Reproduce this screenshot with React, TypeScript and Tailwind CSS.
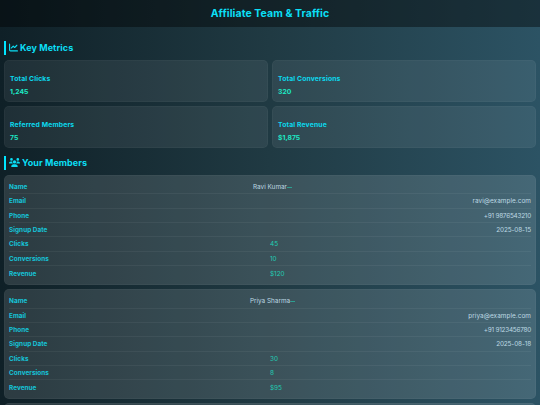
import type { ReactNode } from "react";
import { FaChartLine, FaUsers } from "react-icons/fa6";

const metrics = [
  { label: "Total Clicks", value: "1,245" },
  { label: "Total Conversions", value: "320" },
  { label: "Referred Members", value: "75" },
  { label: "Total Revenue", value: "$1,875" },
];

const members = [
  {
    name: "Ravi Kumar",
    email: "ravi@example.com",
    phone: "+91 9876543210",
    signup: "2025-08-15",
    clicks: "45",
    conversions: "10",
    revenue: "$120",
  },
  {
    name: "Priya Sharma",
    email: "priya@example.com",
    phone: "+91 9123456780",
    signup: "2025-08-18",
    clicks: "30",
    conversions: "8",
    revenue: "$95",
  },
];

function SectionTitle({ icon, children }: { icon: ReactNode; children: ReactNode }) {
  return (
    <h2 className="flex h-[13.5px] items-center gap-[2px] border-l-2 border-[#00e5ff] pl-[3px] text-[9px] font-bold tracking-[0.08px] text-[#0bdff5]">
      {icon}
      <span>{children}</span>
    </h2>
  );
}

function Row({ label, children }: { label: string; children: ReactNode }) {
  return (
    <div className="relative flex h-[14.33px] items-center justify-between border-b border-white/[0.05] pt-[2.5px] last:border-b-0">
      <span className="font-bold tracking-[0.05px] text-[#16c4d8]">{label}</span>
      {children}
    </div>
  );
}

// Numeric values start at the middle of the card
function Stat({ children }: { children: ReactNode }) {
  return <span className="w-[261px] text-[#22cdb4]">{children}</span>;
}

export default function App() {
  return (
    <div className="h-[405px] overflow-hidden bg-[linear-gradient(90deg,#0f2027,#203a43,#2c5364)] font-['Inter','Liberation_Sans',sans-serif] text-[#bdd9e3]">
      <header className="flex h-[27px] items-center justify-center bg-black/40 pt-px">
        <h1 className="text-[10.5px] font-bold tracking-[0.07px] text-[#0bdff5]">Affiliate Team &amp; Traffic</h1>
      </header>

      <main className="px-1 pt-[14px]">
        <SectionTitle icon={<FaChartLine className="size-[9px]" />}>Key Metrics</SectionTitle>

        <div className="mt-[5.5px] grid grid-cols-2 gap-1">
          {metrics.map((m) => (
            <div
              key={m.label}
              className="h-[42px] rounded-[5px] border border-white/[0.03] bg-white/[0.07] pt-[12px] pl-[5px]"
            >
              <h3 className="text-[6.8px] leading-[12px] font-bold tracking-[0.15px] text-[#0bd9ee]">{m.label}</h3>
              <p className="text-[6.8px] leading-[13px] font-bold text-[#1de9c6]">{m.value}</p>
            </div>
          ))}
        </div>

        <div className="mt-[8px]">
          <SectionTitle icon={<FaUsers className="h-[9px] w-[11px]" />}>Your Members</SectionTitle>
        </div>

        <div className="mt-[5px] flex flex-col gap-1 text-[6.4px]">
          {members.map((m) => (
            <div
              key={m.email}
              className="h-[110.3px] rounded-[5px] border border-white/[0.03] bg-white/[0.12] px-1 pt-[4.5px]"
            >
              <Row label="Name">
                <span className="absolute inset-x-0 pl-[5px] text-center">
                  {m.name}
                  <span className="inline-block w-[5px] overflow-hidden align-bottom text-[#22cdb4]">—</span>
                </span>
              </Row>
              <Row label="Email"><span className="tracking-[0.06px]">{m.email}</span></Row>
              <Row label="Phone"><span className="tracking-[-0.23px]">{m.phone}</span></Row>
              <Row label="Signup Date"><span className="tracking-[-0.13px]">{m.signup}</span></Row>
              <Row label="Clicks"><Stat>{m.clicks}</Stat></Row>
              <Row label="Conversions"><Stat>{m.conversions}</Stat></Row>
              <Row label="Revenue"><Stat>{m.revenue}</Stat></Row>
            </div>
          ))}
          <div className="h-[110.3px] rounded-[5px] border border-white/[0.03] bg-white/[0.12]" />
        </div>
      </main>
    </div>
  );
}
